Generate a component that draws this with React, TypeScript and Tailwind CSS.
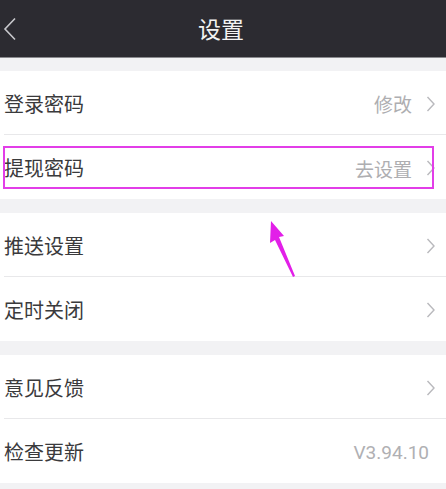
import React from "react";

const font = { fontFamily: '"Noto Sans CJK SC", "Noto Sans", sans-serif' };

function Chevron() {
  return (
    <svg width="10" height="16" viewBox="0 0 10 16" className="ml-[14px]">
      <path d="M1.5 1 L8 8 L1.5 15" fill="none" stroke="#b9b9bd" strokeWidth="1.4" />
    </svg>
  );
}

function Row({ label, value, chevron = true, divider = false }: { label: string; value?: string; chevron?: boolean; divider?: boolean }) {
  return (
    <div className={`flex h-[64px] items-center pr-[10px] ml-[4px] pt-[2px] ${divider ? "border-b border-[#e8e8ea]" : ""}`}>
      <span className="text-[20px] text-[#3a3a3c] flex-1 leading-none">{label}</span>
      {value && <span className="text-[19px] text-[#aeaeb1] leading-none">{value}</span>}
      {chevron && <Chevron />}
    </div>
  );
}

export default function App() {
  return (
    <div style={font} className="relative w-[446px] h-[489px] bg-[#f2f2f4] overflow-hidden">
      <div className="h-[58px] bg-[#2c2b31] flex items-center justify-center relative border-b border-[#8a8a8e]">
        <svg width="14" height="24" viewBox="0 0 14 24" className="absolute left-[3px] top-[17px]">
          <path d="M12 1.5 L2 12 L12 22.5" fill="none" stroke="#c8c8cc" strokeWidth="1.6" />
        </svg>
        <span className="text-[23px] text-[#f2f2f2] leading-none ml-[-4px]">设置</span>
      </div>
      <div className="mt-[13px] bg-white">
        <Row label="登录密码" value="修改" divider />
        <Row label="提现密码" value="去设置" />
      </div>
      <div className="mt-[14px] bg-white">
        <Row label="推送设置" divider />
        <Row label="定时关闭" />
      </div>
      <div className="mt-[14px] bg-white">
        <Row label="意见反馈" divider />
        <div className="flex h-[64px] items-center pr-[17px] ml-[4px] pt-[2px]">
          <span className="text-[20px] text-[#3a3a3c] flex-1 leading-none">检查更新</span>
          <span className="text-[19px] text-[#b0b0b3] leading-none" style={{ fontFamily: '"Roboto", sans-serif' }}>V3.94.10</span>
        </div>
      </div>
      <div className="absolute left-[3px] top-[146px] w-[431px] h-[43px] border-2 border-[#e23ee8]" />
      <svg className="absolute left-[262px] top-[218px]" width="40" height="64" viewBox="0 0 40 64">
        <path d="M9 3 L22 18 L17 19 L33 58 L31 59 L13 22 L8 25 Z" fill="#e21fe8" />
      </svg>
    </div>
  );
}
